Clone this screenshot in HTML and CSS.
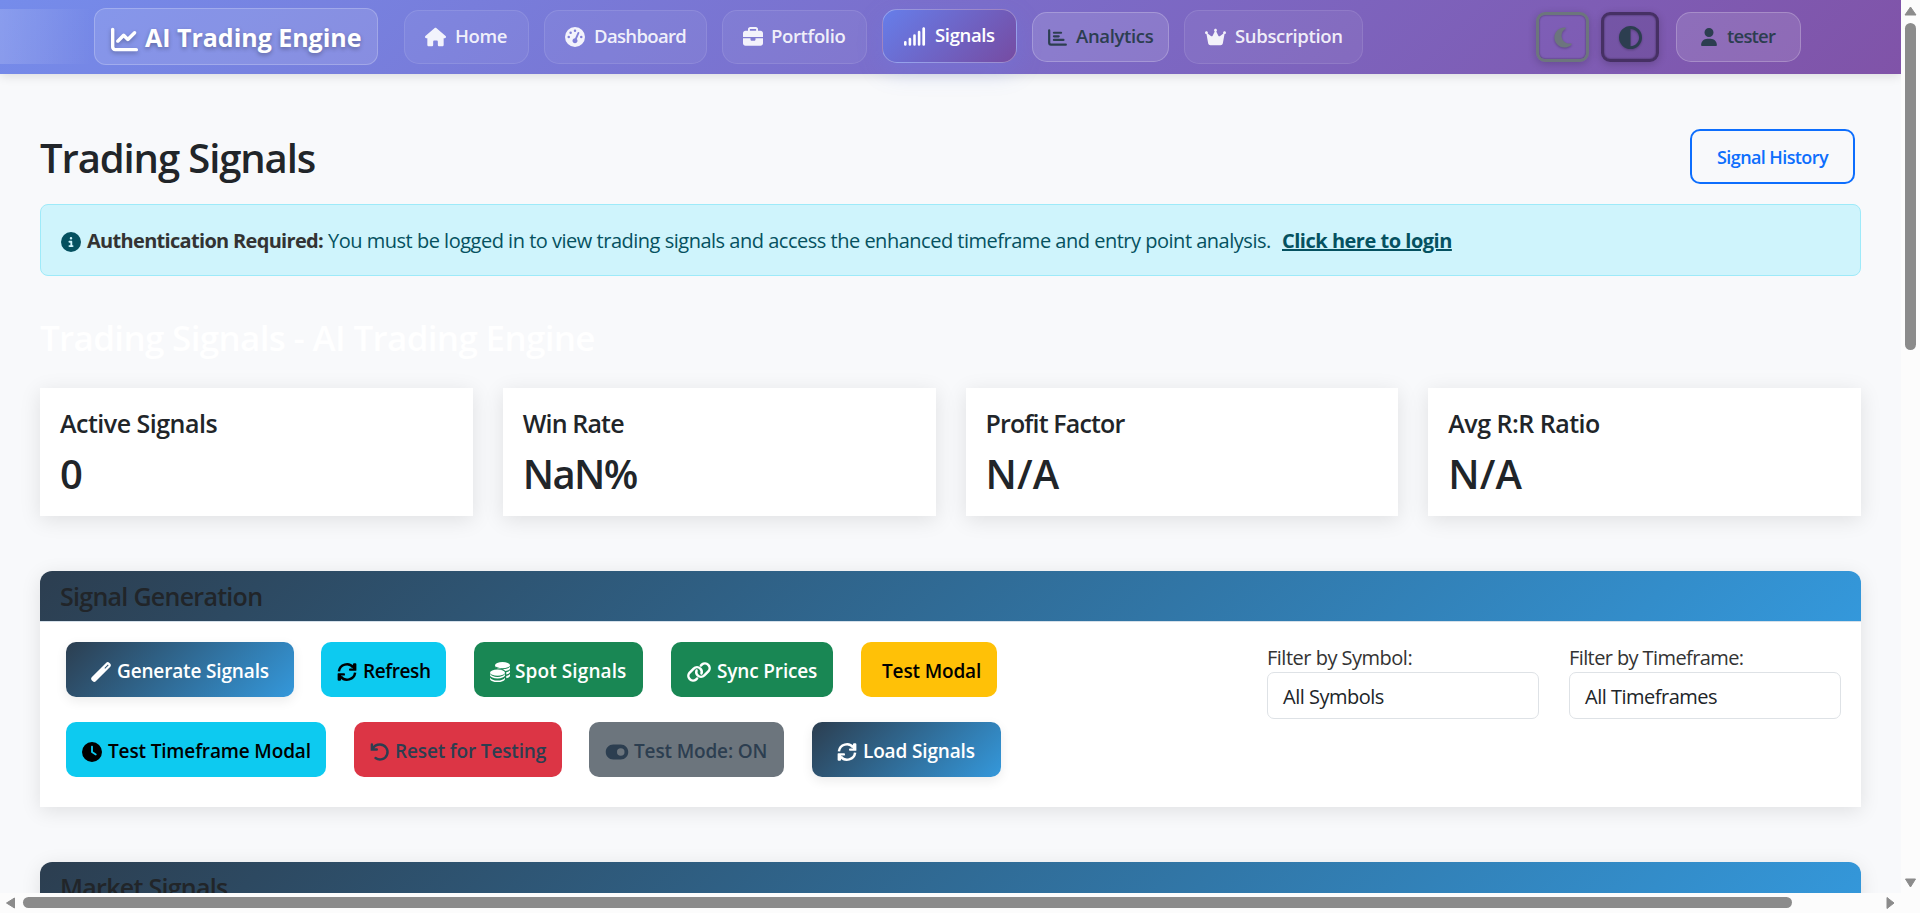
FILE: index.html
```html
<!DOCTYPE html>
<html lang="en">
<head>
<meta charset="utf-8">
<title>Trading Signals - AI Trading Engine</title>
<link rel="stylesheet" href="styles.css">
</head>
<body>
<svg class="sprite" aria-hidden="true">
  <symbol id="i-line" viewBox="0 0 512 512"><path d="M64 64c0-17.700-14.300-32-32-32S0 46.300 0 64V400c0 44.200 35.800 80 80 80H480c17.700 0 32-14.300 32-32s-14.300-32-32-32H80c-8.800 0-16-7.200-16-16V64zm406.600 86.600c12.500-12.500 12.500-32.800 0-45.300s-32.800-12.500-45.300 0L320 210.700l-57.400-57.400c-12.500-12.500-32.800-12.500-45.300 0l-112 112c-12.500 12.500-12.500 32.800 0 45.300s32.800 12.500 45.300 0L240 221.300l57.400 57.400c12.500 12.500 32.800 12.500 45.300 0l128-128z"/></symbol>
  <symbol id="i-home" viewBox="0 0 576 512"><path d="M575.8 255.500c0 18-15 32.100-32 32.100h-32l.7 184.400c0 22-18 40-40 40H392c-22.100 0-40-17.900-40-40V384c0-17.700-14.300-32-32-32H256c-17.700 0-32 14.300-32 32v88c0 22.100-17.900 40-40 40H104c-22.100 0-40-17.900-40-40V287.600H32c-18 0-32-14-32-32.100c0-9 3-17 10-24L266.400 8c7-7 15-8 22-8s15 2 21 7L564.800 231.500c8 7 12 15 11 24z"/></symbol>
  <symbol id="i-gauge" viewBox="0 0 512 512"><path fill-rule="evenodd" d="M0 256a256 256 0 1 1 512 0A256 256 0 1 1 0 256zM288 96a32 32 0 1 0-64 0 32 32 0 1 0 64 0zM256 416c35.300 0 64-28.700 64-64 0-17.400-6.900-33.100-18.100-44.600L366 161.700c5.300-12.100-.2-26.300-12.300-31.600s-26.300 .2-31.600 12.300L257.900 288H256c-35.300 0-64 28.700-64 64s28.700 64 64 64zM176 144a32 32 0 1 0-64 0 32 32 0 1 0 64 0zM96 288a32 32 0 1 0 0-64 32 32 0 1 0 0 64zM448 256a32 32 0 1 0-64 0 32 32 0 1 0 64 0z"/></symbol>
  <symbol id="i-case" viewBox="0 0 512 512"><path d="M184 48H328c4.400 0 8 3.600 8 8V96H176V56c0-4.400 3.600-8 8-8zm-56 8V96H64C28.700 96 0 124.700 0 160v96H512V160c0-35.300-28.700-64-64-64H384V56c0-30.900-25.100-56-56-56H184c-30.900 0-56 25.100-56 56zM512 288H320v32c0 17.700-14.300 32-32 32H224c-17.700 0-32-14.300-32-32V288H0V416c0 35.300 28.700 64 64 64H448c35.300 0 64-28.700 64-64V288z"/></symbol>
  <symbol id="i-signal" viewBox="0 0 640 512"><path d="M576 0c22 0 38 16 38 38V476a38 38 0 0 1-76 0V38c0-22 16-38 38-38zM448 96c20 0 36 16 36 36V476a36 36 0 0 1-72 0V132c0-20 16-36 36-36zM356 226V476a36 36 0 0 1-72 0V226a36 36 0 0 1 72 0zM192 288c20 0 36 16 36 36V476a36 36 0 0 1-72 0V324c0-20 16-36 36-36zM100 416v60a36 36 0 0 1-72 0V416a36 36 0 0 1 72 0z"/></symbol>
  <symbol id="i-bars" viewBox="0 0 512 512"><path fill="none" stroke="currentColor" stroke-width="60" stroke-linecap="round" d="M32 62V400q0 48 48 48H480M160 128H352M160 224H288M160 320H416"/></symbol>
  <symbol id="i-crown" viewBox="0 0 576 512"><path d="M309 106c11.400-7 19-19.700 19-34c0-22.100-17.900-40-40-40s-40 17.900-40 40c0 14.400 7.600 27 19 34L209.700 220.600c-9.100 18.200-32.700 23.400-48.600 10.700L72 160c5-6.700 8-15 8-24c0-22.100-17.900-40-40-40S0 113.900 0 136s17.900 40 40 40L86.400 427.400c5.500 30.400 32 52.600 63 52.600H426.600c30.900 0 57.400-22.100 63-52.600L536 176c22.100 0 40-17.900 40-40s-17.900-40-40-40s-40 17.900-40 40c0 9 3 17.300 8 24l-89.100 71.300c-15.900 12.700-39.500 7.500-48.600-10.700L309 106z"/></symbol>
  <symbol id="i-moon" viewBox="0 0 384 512"><path d="M223.500 32C100 32 0 132.300 0 256S100 480 223.500 480c60.600 0 115.500-24.200 155.800-63.400c5-4.900 6.300-12.500 3.100-18.700s-10.100-9.700-17-8.500c-9.800 1.700-19.800 2.600-30.100 2.600c-96.900 0-175.500-78.800-175.500-176c0-65.800 36-123.100 89.300-153.300c6.100-3.500 9.200-10.500 7.700-17.300s-7.300-11.900-14.300-12.500c-6.300-.5-12.600-.8-19-.8z"/></symbol>
  <symbol id="i-half" viewBox="0 0 512 512"><path fill-rule="evenodd" d="M448 256c0-106-86-192-192-192V448c106 0 192-86 192-192zM0 256a256 256 0 1 1 512 0A256 256 0 1 1 0 256z"/></symbol>
  <symbol id="i-user" viewBox="0 0 448 512"><path d="M224 256A128 128 0 1 0 224 0a128 128 0 1 0 0 256zm-45.700 48C79.800 304 0 383.800 0 482.300C0 498.700 13.300 512 29.700 512H418.300c16.400 0 29.700-13.300 29.700-29.700C448 383.800 368.200 304 269.700 304H178.300z"/></symbol>
  <symbol id="i-info" viewBox="0 0 512 512"><path fill-rule="evenodd" d="M256 512A256 256 0 1 0 256 0a256 256 0 1 0 0 512zM216 336h24V272H216c-13.300 0-24-10.700-24-24s10.700-24 24-24h48c13.300 0 24 10.700 24 24v88h8c13.300 0 24 10.700 24 24s-10.700 24-24 24H216c-13.300 0-24-10.700-24-24s10.700-24 24-24zm40-208a32 32 0 1 1 0 64 32 32 0 1 1 0-64z"/></symbol>
  <symbol id="i-wand" viewBox="0 0 512 512"><path fill-rule="evenodd" d="M390 18c20-20 56-20 76 0l28 28c20 20 20 56 0 76L122 494c-20 20-56 20-76 0l-28-28c-20-20-20-56 0-76zM344 152l18 18L452 84 432 64z"/></symbol>
  <symbol id="i-sync" viewBox="0 0 512 512"><path fill="none" stroke="currentColor" stroke-width="64" d="M48 240A208 208 0 0 1 416 138M464 272A208 208 0 0 1 96 374"/><path d="M440 32h28q28 0 28 28V208q0 16-16 16H328q-20 0-20-24v-12q0-22 22-22h78V60q0-28 32-28zM72 480H44q-28 0-28-28V304q0-16 16-16H184q20 0 20 24v12q0 22-22 22H104V452q0 28-32 28z"/></symbol>
  <symbol id="i-coins" viewBox="0 0 512 512"><ellipse cx="320" cy="80" rx="192" ry="80"/><path d="M128 100v24q25 36 110 42 110 4 160 64 90-10 114-58v-50q-50 62-192 62-140 0-192-84zM416 262q70-12 96-50v50q-24 44-96 58zM416 356q70-12 96-50v50q-24 44-96 58z"/><ellipse cx="192" cy="272" rx="192" ry="80"/><path d="M0 310q54 72 192 72t192-72v38q-30 72-192 72T0 348zM0 402q54 72 192 72t192-72v38q-30 72-192 72T0 440z"/></symbol>
  <symbol id="i-link" viewBox="0 0 640 512"><g fill="none" stroke="currentColor" stroke-width="66" stroke-linecap="round"><path d="M270 428l-27 27A126 126 0 0 1 66 277L178 165A126 126 0 0 1 356 165 126 126 0 0 1 386 295"/><path d="M370 84l27-27A126 126 0 0 1 574 235L462 347A126 126 0 0 1 284 347 126 126 0 0 1 254 217"/></g></symbol>
  <symbol id="i-clock" viewBox="0 0 512 512"><path fill-rule="evenodd" d="M256 0a256 256 0 1 1 0 512A256 256 0 1 1 256 0zM232 120V256c0 8 4 15.500 10.700 20l96 64c11 7.400 25.900 4.400 33.300-6.700s4.400-25.900-6.700-33.300L280 243.200V120c0-13.300-10.700-24-24-24s-24 10.700-24 24z"/></symbol>
  <symbol id="i-undo" viewBox="0 0 512 512"><path fill="none" stroke="currentColor" stroke-width="62" stroke-linecap="round" d="M48 66V192H174M58 182C110 84 190 64 256 64A192 192 0 1 1 142 410"/></symbol>
  <symbol id="i-toggle" viewBox="0 0 576 512"><path fill-rule="evenodd" d="M192 64C86 64 0 150 0 256S86 448 192 448H384c106 0 192-86 192-192S490 64 384 64H192zm192 96a96 96 0 1 1 0 192 96 96 0 1 1 0-192z"/></symbol>
</svg>

<div class="screen">
  <div class="viewport">
    <header class="navbar">
      <a class="brand"><svg class="ic"><use href="#i-line"/></svg><span>AI Trading Engine</span></a>
      <nav class="links">
        <a class="link home"><svg class="ic"><use href="#i-home"/></svg><span>Home</span></a>
        <a class="link dash"><svg class="ic"><use href="#i-gauge"/></svg><span>Dashboard</span></a>
        <a class="link port"><svg class="ic"><use href="#i-case"/></svg><span>Portfolio</span></a>
        <a class="link active"><svg class="ic"><use href="#i-signal"/></svg><span>Signals</span></a>
        <a class="link dark anal"><svg class="ic"><use href="#i-bars"/></svg><span>Analytics</span></a>
        <a class="link subs"><svg class="ic"><use href="#i-crown"/></svg><span>Subscription</span></a>
      </nav>
      <div class="tools">
        <button class="tool moon"><svg class="ic"><use href="#i-moon"/></svg></button>
        <button class="tool half"><svg class="ic"><use href="#i-half"/></svg></button>
        <a class="link dark user"><svg class="ic"><use href="#i-user"/></svg><span>tester</span></a>
      </div>
    </header>

    <main class="main">
      <div class="title-row">
        <h1>Trading Signals</h1>
        <a class="history"><span>Signal History</span></a>
      </div>
      <div class="alert">
        <svg class="ic"><use href="#i-info"/></svg>
        <strong>Authentication Required:</strong>
        <span class="msg">You must be logged in to view trading signals and access the enhanced timeframe and entry point analysis.</span>
        <a class="login">Click here to login</a>
      </div>
      <h2>Trading Signals - AI Trading Engine</h2>
      <section class="stats">
        <div class="stat"><h3>Active Signals</h3><p>0</p></div>
        <div class="stat tight"><h3>Win Rate</h3><p>NaN%</p></div>
        <div class="stat tight"><h3>Profit Factor</h3><p class="na">N/A</p></div>
        <div class="stat"><h3>Avg R:R Ratio</h3><p class="na">N/A</p></div>
      </section>
      <section class="panel">
        <h3 class="panel-head">Signal Generation</h3>
        <div class="panel-body">
          <div class="actions">
            <div class="row">
              <button class="btn blue gen"><svg class="ic"><use href="#i-wand"/></svg><span>Generate Signals</span></button>
              <button class="btn cyan ref"><svg class="ic"><use href="#i-sync"/></svg><span>Refresh</span></button>
              <button class="btn green spot"><svg class="ic"><use href="#i-coins"/></svg><span>Spot Signals</span></button>
              <button class="btn green sync"><svg class="ic wide"><use href="#i-link"/></svg><span>Sync Prices</span></button>
              <button class="btn yellow tm"><span>Test Modal</span></button>
            </div>
            <div class="row">
              <button class="btn cyan tf"><svg class="ic"><use href="#i-clock"/></svg><span>Test Timeframe Modal</span></button>
              <button class="btn red reset"><svg class="ic"><use href="#i-undo"/></svg><span>Reset for Testing</span></button>
              <button class="btn grey mode"><svg class="ic wide"><use href="#i-toggle"/></svg><span>Test Mode: ON</span></button>
              <button class="btn blue load"><svg class="ic"><use href="#i-sync"/></svg><span>Load Signals</span></button>
            </div>
          </div>
          <div class="filters">
            <div class="filter"><label>Filter by Symbol:</label><div class="select">All Symbols</div></div>
            <div class="filter"><label>Filter by Timeframe:</label><div class="select">All Timeframes</div></div>
          </div>
        </div>
      </section>
      <section class="panel">
        <h3 class="panel-head market">Market Signals</h3>
        <div class="panel-body"></div>
      </section>
    </main>
  </div>
  <div class="vbar"><svg viewBox="0 0 19 893"><path d="M9.500 7L15 15H4z" stroke="#8b8b8b" stroke-linejoin="round"/><rect x="4" y="23" width="11" height="327" rx="5.500"/><path d="M4.500 879h10l-5 8z" stroke="#8b8b8b" stroke-linejoin="round"/></svg></div>
  <div class="hbar"><svg viewBox="0 0 1920 20"><path d="M6.500 10l8-5v10z" stroke="#8b8b8b" stroke-linejoin="round"/><rect x="23" y="4" width="1769" height="11" rx="5.500"/><path d="M1887 4.500l7 5.500-7 5.500z" stroke="#8b8b8b" stroke-linejoin="round"/></svg></div>
</div>
</body>
</html>
```
FILE: styles.css
```css
* { box-sizing: border-box; }
body { margin: 0; overflow: hidden; font-family: "Open Sans", "Noto Sans", sans-serif; font-size: 20px; color: #212529; }
h1, h2, h3, p { margin: 0; }
button { font: inherit; border: 0; padding: 0; }
.sprite { position: absolute; width: 0; height: 0; }
.ic { width: 20px; height: 20px; fill: currentColor; flex: none; overflow: visible; }
.ic.wide { width: 24px; }
span, strong, h1, h2, h3, label, .login, .select { white-space: nowrap; }

.screen { display: grid; grid-template: 893px 20px / 1901px 19px; width: 1920px; height: 913px; background: #fcfcfc; }
.viewport { overflow: hidden; background: #f8f9fb; }
.vbar svg, .hbar svg { display: block; fill: #8b8b8b; }
.vbar svg { width: 19px; height: 893px; }
.hbar { grid-column: 1 / 3; }
.hbar svg { width: 1920px; height: 20px; }

.navbar { position: relative; display: flex; align-items: center; height: 74px; padding: 0 100px 0 94px; background: linear-gradient(90deg, rgba(255,255,255,.15), rgba(255,255,255,0) 92px) 0 9px / 100% 55px no-repeat, linear-gradient(135deg, #758ceb 0%, #7b6dca 50%, #8053a8 100%); box-shadow: 0 2px 10px rgba(0,0,0,.12); }
.brand { display: flex; align-items: center; width: 284px; height: 57px; padding-left: 16px; gap: 7px; border: 1px solid rgba(255,255,255,.22); border-radius: 12px; background: rgba(255,255,255,.12); color: #fff; font-size: 25px; font-weight: 700; letter-spacing: -.02px; text-shadow: 0 2px 4px rgba(0,0,0,.3); margin-top: -1px; }
.brand .ic { width: 27px; height: 27px; margin-top: 6px; filter: drop-shadow(0 2px 2px rgba(0,0,0,.25)); }
.links { display: flex; align-items: center; gap: 15px; margin-left: 26px; }
.link { display: flex; align-items: center; height: 54px; padding-left: 20px; gap: 10px; border: 1px solid rgba(255,255,255,.1); border-radius: 15px; background: rgba(255,255,255,.06); color: rgba(255,255,255,.9); font-size: 18.500px; font-weight: 600; letter-spacing: -.35px; }
.link span { margin-bottom: 3px; }
.home { width: 125px; gap: 9px; }
.home .ic { width: 21px; }
.dash { width: 163px; gap: 9px; letter-spacing: -.65px; }
.port { width: 145px; gap: 8px; }
.subs { width: 179px; gap: 9px; }
.subs .ic { width: 21px; }
.active { width: 135px; color: #fff; border-color: rgba(255,255,255,.3); background: linear-gradient(135deg, #667eea, #764ba2); box-shadow: 0 8px 25px rgba(102,126,234,.25); margin-top: -2px; gap: 9px; }
.active .ic { width: 23px; height: 19px; }
.dark { height: 50px; padding-left: 15px; color: #2c3e50; border-color: rgba(255,255,255,.22); background: rgba(255,255,255,.12); }
.anal { width: 137px; gap: 9px; }
.anal .ic { width: 19px; height: 19px; }
.tools { display: flex; align-items: center; margin-left: auto; }
.tool { display: flex; align-items: center; justify-content: center; height: 50px; border-radius: 9px; background: none; box-shadow: 0 2px 8px rgba(0,0,0,.2), inset 0 0 2px rgba(0,0,0,.5); }
.tool .ic { filter: drop-shadow(0 1px 1px rgba(0,0,0,.25)); }
.moon { width: 53px; border: 3px solid #6c757d; color: #6c757d; margin-right: 12px; }
.moon .ic { width: 18px; height: 23px; }
.half { width: 58px; border: 3px solid #463064; color: #2c3e50; background: rgba(60,50,90,.15); margin-right: 17px; }
.half .ic { width: 23px; height: 23px; }
.user { width: 125px; padding-left: 23px; gap: 9px; letter-spacing: -.8px; }
.user .ic { width: 18px; height: 18px; }

.main { padding: 55px 40px 0; }
.title-row { display: flex; justify-content: space-between; height: 75px; padding-right: 6px; }
h1 { font-size: 40px; line-height: 58px; font-weight: 600; letter-spacing: -1.1px; }
.history { display: flex; align-items: center; justify-content: center; width: 165px; height: 55px; border: 2px solid #0d6efd; border-radius: 10px; color: #0d6efd; font-size: 18px; font-weight: 600; letter-spacing: -.6px; }
.alert { display: flex; align-items: center; height: 72px; padding-left: 20px; border: 1px solid #9eeaf9; border-radius: 8px; background: #cff4fc; color: #055160; letter-spacing: -.49px; }
.alert .ic { margin: 3px 6px 0 0; }
.alert strong { width: 241px; color: #333; font-weight: 700; letter-spacing: -.69px; }
.alert .msg { width: 954px; }
.login { font-weight: 700; text-decoration: underline; }
h2 { margin-top: 39px; height: 73px; font-size: 35px; line-height: 46px; font-weight: 600; color: #fff; letter-spacing: -.67px; }
.stats { display: grid; grid-template-columns: repeat(4, 1fr); gap: 30px; }
.stat { height: 128px; padding: 19px 20px; background: #fff; box-shadow: 0 4px 20px rgba(0,0,0,.1); }
.stat h3, .panel-head { font-size: 25px; font-weight: 600; line-height: 32px; letter-spacing: -.72px; }
.stat h3 { letter-spacing: -.5px; }
.tight h3 { letter-spacing: -.85px; }
.stat p { font-size: 40px; line-height: 48px; font-weight: 600; margin-top: 11px; letter-spacing: -1.6px; }
.stat .na { letter-spacing: .2px; }
.panel { margin-top: 55px; border-radius: 12px 12px 0 0; background: #fff; box-shadow: 0 4px 20px rgba(0,0,0,.1); }
.panel-head { height: 51px; padding: 9px 20px; border-bottom: 1px solid #d5e0ea; border-radius: 12px 12px 0 0; background: linear-gradient(135deg, #2c3e50, #3498db); }
.panel-body { display: flex; justify-content: space-between; height: 185px; padding: 20px 20px 0 26px; }
.row { display: flex; margin-bottom: 25px; }
.btn { display: flex; align-items: center; height: 55px; padding-left: 16px; gap: 6px; border-radius: 10px; font-weight: 600; font-size: 19px; letter-spacing: -.15px; }
.btn .ic { margin-top: 5px; }
.btn span { margin-top: 2px; }
.blue { background: linear-gradient(135deg, #2c3e50, #3498db); color: #fff; box-shadow: 0 4px 12px rgba(0,0,0,.08); padding-left: 25px; }
.cyan { background: #0dcaf0; color: #000; }
.green { background: #198754; color: #fff; }
.yellow { background: #ffc107; color: #000; padding-left: 21px; }
.red { background: #dc3545; color: #2c3e50; }
.grey { background: #6c757d; color: #2c3e50; }
.gen { width: 228px; margin-right: 27px; }
.ref { width: 125px; margin-right: 28px; letter-spacing: -.4px; }
.spot { width: 169px; margin-right: 28px; gap: 5px; letter-spacing: .1px; }
.sync { width: 162px; margin-right: 28px; }
.tm { width: 136px; }
.tf { width: 260px; margin-right: 28px; }
.reset { width: 208px; margin-right: 27px; gap: 5px; }
.mode { width: 195px; margin-right: 28px; gap: 5px; }
.load { width: 189px; }
.filters { display: flex; gap: 30px; }
.filter { width: 272px; letter-spacing: -.5px; }
.filter label { display: block; height: 30px; line-height: 32px; color: #333; }
.filter:last-child label { letter-spacing: -.6px; }
.select { height: 47px; line-height: 47px; padding-left: 15px; border: 1px solid #dee2e6; border-radius: 7px; }
```
